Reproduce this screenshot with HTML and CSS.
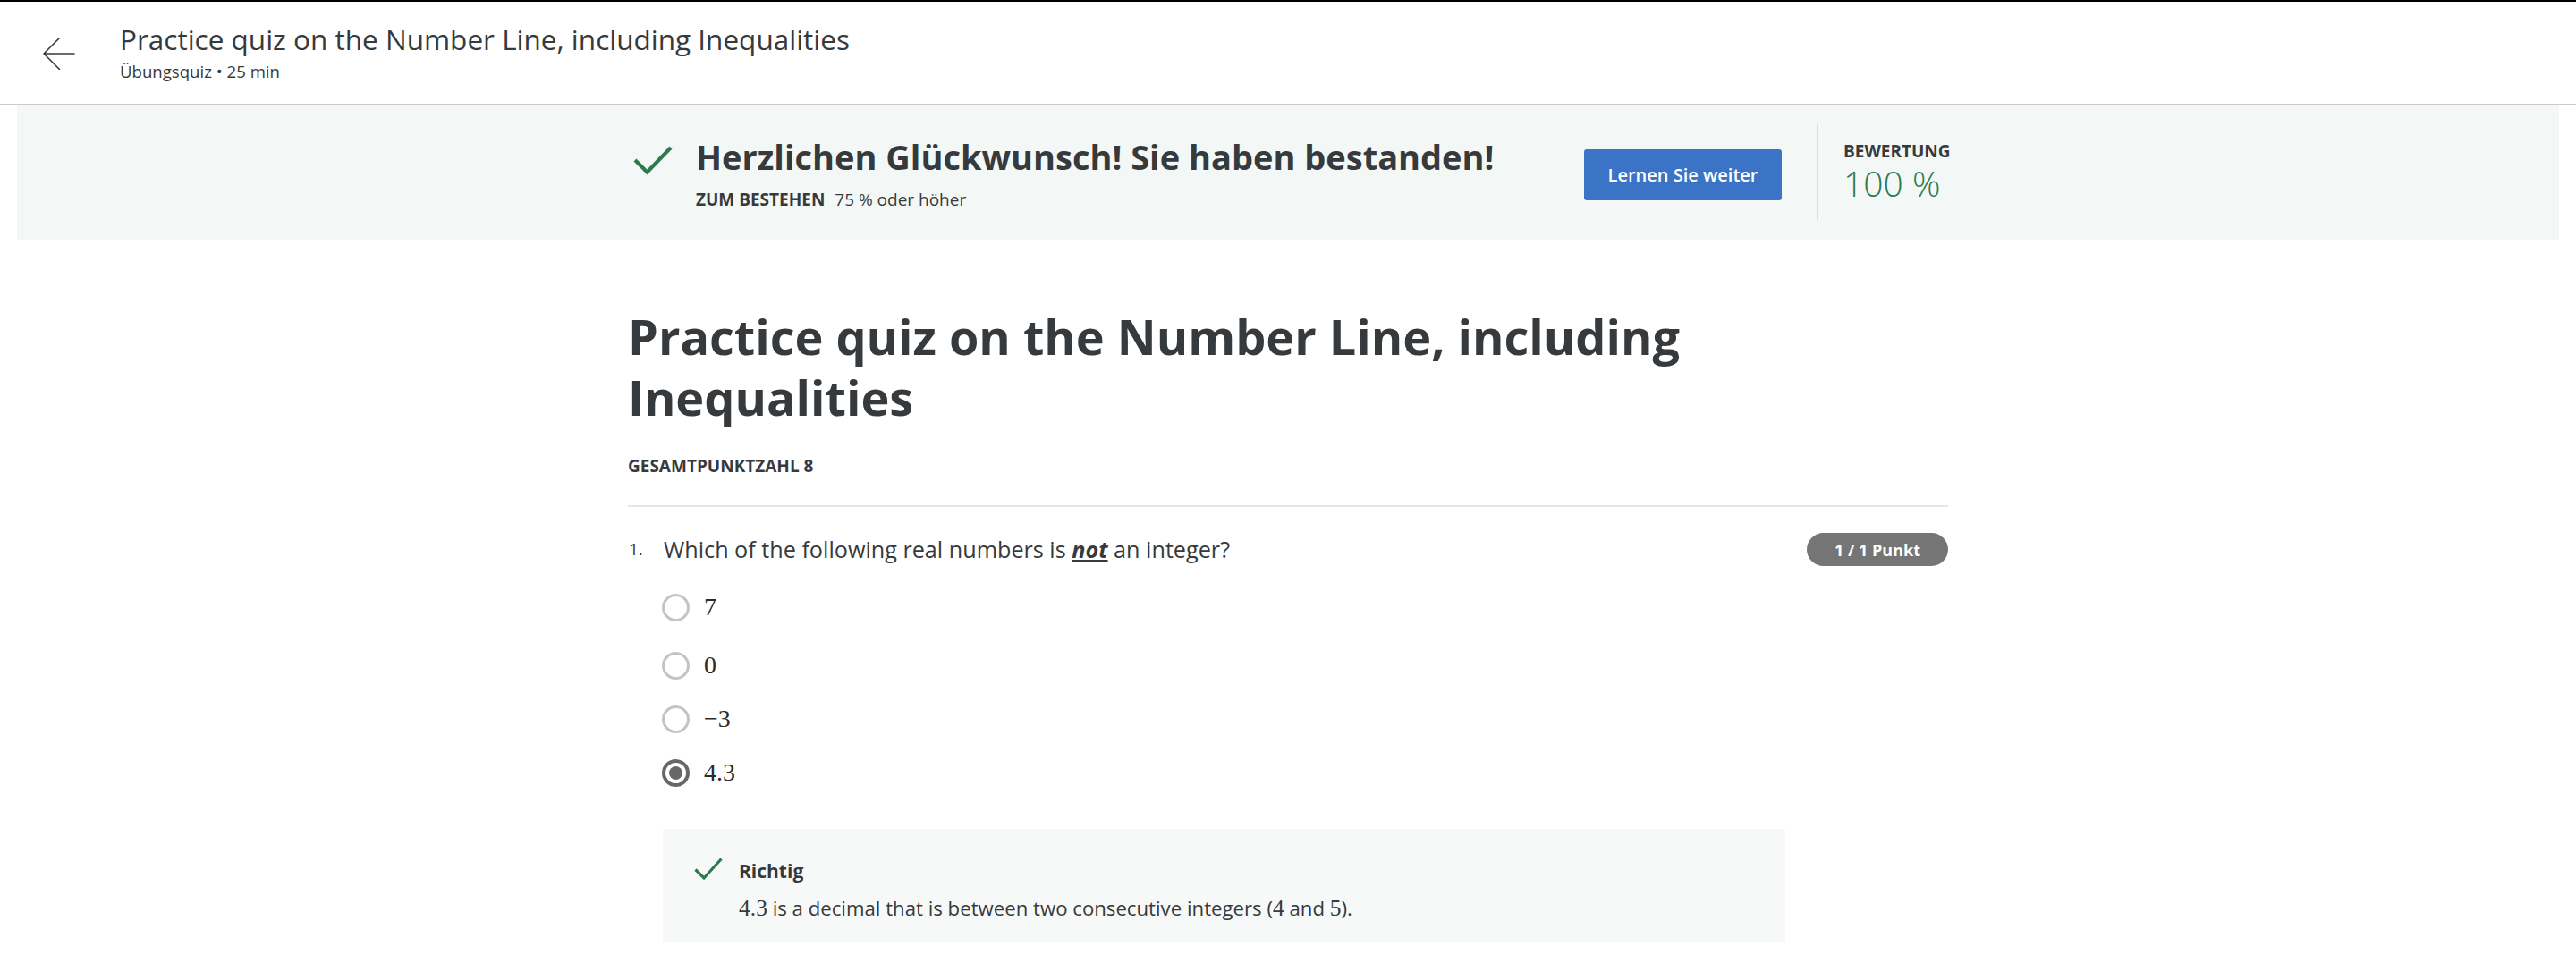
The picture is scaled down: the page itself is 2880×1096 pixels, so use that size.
FILE: index.html
```html
<!DOCTYPE html>
<html lang="de">
<head>
<meta charset="utf-8">
<title>Practice quiz on the Number Line, including Inequalities</title>
<link rel="stylesheet" href="styles.css">
</head>
<body>
<div class="topbar"></div>
<header class="header">
  <a class="back" href="#" aria-label="Zurück">
    <svg width="36" height="36" viewBox="0 0 36 36" fill="none" stroke="#373a3c" stroke-width="1.6" stroke-linecap="round" stroke-linejoin="round">
      <path d="M35 18H1M18.5 0.5L1 18L18.5 35.5"/>
    </svg>
  </a>
  <div class="header-text">
    <div class="header-title">Practice quiz on the Number Line, including Inequalities</div>
    <div class="header-sub">Übungsquiz • 25 min</div>
  </div>
</header>

<section class="banner">
  <div class="banner-inner">
    <div class="result">
      <svg class="result-check" width="44" height="34" viewBox="0 0 44 34" fill="none" stroke="#2e7a50" stroke-width="4.2" stroke-linecap="butt" stroke-linejoin="miter">
        <path d="M2 17L15.5 30.5L42 3"/>
      </svg>
      <div class="result-text">
        <h2 class="result-title">Herzlichen Glückwunsch! Sie haben bestanden!</h2>
        <div class="result-sub"><span class="result-sub-label">ZUM BESTEHEN</span> 75 % oder höher</div>
      </div>
    </div>
    <a class="btn" href="#">Lernen Sie weiter</a>
    <div class="divider"></div>
    <div class="grade">
      <div class="grade-label">BEWERTUNG</div>
      <div class="grade-value">100 %</div>
    </div>
  </div>
</section>

<main class="content">
  <h1 class="quiz-title">Practice quiz on the Number Line, including Inequalities</h1>
  <div class="total">GESAMTPUNKTZAHL 8</div>
  <div class="rule"></div>

  <div class="question">
    <div class="q-head">
      <span class="q-num">1.</span>
      <div class="q-text">Which of the following real numbers is <strong class="not">not</strong> an integer?</div>
      <span class="badge">1 / 1 Punkt</span>
    </div>

    <div class="options">
      <label class="option option-first"><span class="radio"></span><span class="math">7</span></label>
      <label class="option"><span class="radio"></span><span class="math">0</span></label>
      <label class="option"><span class="radio"></span><span class="math">−3</span></label>
      <label class="option"><span class="radio radio-on"></span><span class="math">4.3</span></label>
    </div>

    <div class="feedback">
      <svg class="fb-check" width="32" height="26" viewBox="0 0 32 26" fill="none" stroke="#2e7a50" stroke-width="3.2">
        <path d="M1.5 13.5L11 23L30.5 1.5"/>
      </svg>
      <div class="fb-body">
        <div class="fb-title">Richtig</div>
        <div class="fb-text"><span class="math-inline">4.3</span> is a decimal that is between two consecutive integers (<span class="math-inline">4</span> and <span class="math-inline">5</span>).</div>
      </div>
    </div>
  </div>
</main>
</body>
</html>
```

FILE: styles.css
```css
* {
  box-sizing: border-box;
}

html, body {
  margin: 0;
  padding: 0;
  background: #ffffff;
}

body {
  font-family: "Open Sans", "Noto Sans", Arial, sans-serif;
  color: #373a3c;
}

.topbar {
  height: 2px;
  background: #000000;
}

.header {
  display: flex;
  align-items: center;
  height: 115px;
  padding-left: 48px;
  border-bottom: 1px solid #c9c9c9;
}

.back {
  display: flex;
  width: 36px;
  height: 36px;
  margin-right: 50px;
  margin-top: 1px;
}

.header-title {
  font-size: 31.5px;
  line-height: 36px;
  font-weight: 400;
  color: #373a3c;
}

.header-sub {
  font-size: 18.6px;
  line-height: 24px;
  margin-top: 6px;
  color: #373a3c;
}

/* Banner */
.banner {
  margin: 0 19px 0 19px;
  height: 151px;
  background: #f3f8f6;
  display: flex;
  align-items: center;
}

.banner-inner {
  width: 1476px;
  margin: 0 auto;
  display: flex;
  align-items: center;
}

.result {
  flex: 1;
  display: flex;
  align-items: flex-start;
}

.result-check {
  margin-left: 6px;
  margin-top: 13px;
  margin-right: 26px;
  flex: none;
}

.result-title {
  margin: 0;
  font-size: 38px;
  line-height: 52px;
  font-weight: 700;
  color: #373a3c;
}

.result-sub {
  margin-top: 8px;
  font-size: 19px;
  line-height: 28px;
  color: #373a3c;
}

.result-sub-label {
  font-weight: 700;
  margin-right: 6px;
}

.btn {
  display: flex;
  align-items: center;
  justify-content: center;
  width: 221px;
  height: 57px;
  margin-top: 6px;
  background: #3b74c6;
  border-radius: 3px;
  color: #ffffff;
  text-decoration: none;
  font-size: 20px;
  font-weight: 600;
}

.divider {
  width: 1px;
  height: 107px;
  background: #dcdedd;
  margin: 0 29px 0 39px;
}

.grade {
  width: 117px;
}

.grade-label {
  font-size: 19px;
  line-height: 24px;
  font-weight: 700;
  color: #373a3c;
}

.grade-value {
  font-size: 39px;
  line-height: 48px;
  font-weight: 300;
  color: #2e7a50;
}

/* Content */
.content {
  width: 1476px;
  margin: 0 auto;
  padding-top: 74px;
}

.quiz-title {
  margin: 0;
  font-size: 54px;
  line-height: 68px;
  font-weight: 700;
  color: #373a3c;
}

.total {
  margin-top: 31px;
  font-size: 19px;
  line-height: 24px;
  font-weight: 700;
  color: #373a3c;
}

.rule {
  margin-top: 32px;
  height: 2px;
  background: #e6e6e6;
}

.question {
  padding-top: 29px;
}

.q-head {
  display: flex;
  align-items: flex-start;
}

.q-num {
  width: 40px;
  padding-left: 1px;
  font-size: 19px;
  line-height: 36px;
}

.q-text {
  flex: 1;
  font-size: 25.2px;
  line-height: 36px;
}

.not {
  font-weight: 700;
  font-style: italic;
  text-decoration: underline;
}

.badge {
  display: flex;
  align-items: center;
  justify-content: center;
  width: 158px;
  height: 37px;
  border-radius: 19px;
  background: #757575;
  color: #ffffff;
  font-size: 18px;
  font-weight: 700;
}

.options {
  display: flex;
  flex-direction: column;
  padding-left: 38px;
  margin-top: 16px;
}

.option {
  display: flex;
  align-items: center;
  height: 60px;
}

.option-first {
  margin-bottom: 5px;
}

.radio {
  width: 31px;
  height: 31px;
  border: 3px solid #c4c4c4;
  border-radius: 50%;
  margin-right: 16px;
  flex: none;
  display: flex;
  align-items: center;
  justify-content: center;
}

.radio-on {
  border: 4px solid #676767;
}

.radio-on::after {
  content: "";
  width: 15px;
  height: 15px;
  border-radius: 50%;
  background: #676767;
}

.math {
  font-family: "Liberation Serif", "Times New Roman", serif;
  font-size: 28px;
  line-height: 36px;
  color: #2b2b2b;
}

.math-inline {
  font-family: "Liberation Serif", "Times New Roman", serif;
  font-size: 25.5px;
}

.feedback {
  margin-top: 33px;
  margin-left: 39px;
  width: 1255px;
  min-height: 126px;
  background: #f7f9f8;
  display: flex;
  align-items: flex-start;
  padding: 32px 24px 22px 35px;
}

.fb-check {
  margin-right: 18px;
  flex: none;
}

.fb-title {
  font-size: 21px;
  line-height: 28px;
  font-weight: 700;
  margin-top: 1px;
}

.fb-text {
  margin-top: 14px;
  font-size: 22.2px;
  line-height: 28px;
}
```
